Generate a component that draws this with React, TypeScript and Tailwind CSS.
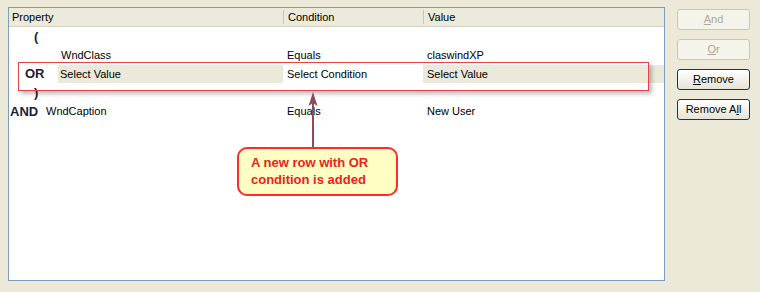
import React from 'react';

const font = { fontFamily: '"Liberation Sans", Arial, sans-serif' };

function XpButton({ children, disabled }: { children: React.ReactNode; disabled?: boolean }) {
  return (
    <button
      type="button"
      className={
        disabled
          ? 'w-[73px] h-[21px] rounded-[3px] border border-[#c9c7ba] bg-[#f5f4ea] text-[11px] text-[#aca899] leading-none'
          : 'w-[73px] h-[21px] rounded-[3px] border border-[#003c74] bg-gradient-to-b from-white to-[#e6e3d6] text-[11px] text-black leading-none'
      }
    >
      {children}
    </button>
  );
}

export default function App() {
  return (
    <div className="w-[760px] h-[292px] bg-[#ece9d8] relative flex text-[11px] text-black" style={font}>
      {/* List */}
      <div className="ml-[8px] mt-[7px] w-[657px] h-[274px] border border-[#7f9db9] bg-white flex flex-col">
        <div className="h-[19px] flex items-center bg-[#ebeadb] border-b border-[#d6d2c2] shrink-0">
          <div className="w-[274px] pl-[3px]">Property</div>
          <div className="w-[140px] pl-[4px] border-l border-[#c7c5b2] h-[14px] flex items-center">Condition</div>
          <div className="flex-1 pl-[4px] border-l border-[#c7c5b2] h-[14px] flex items-center">Value</div>
        </div>

        <div className="h-[19px] flex items-center">
          <span className="pl-[25px] font-bold text-[13px] text-[#1c1c3c]">(</span>
        </div>

        <div className="h-[19px] flex items-center">
          <div className="w-[274px] pl-[52px]">WndClass</div>
          <div className="w-[140px] pl-[4px]">Equals</div>
          <div className="flex-1 pl-[4px]">claswindXP</div>
        </div>

        <div className="h-[18px] flex items-stretch">
          <div className="w-[49px] pl-[16px] flex items-center font-bold text-[13px] text-[#1c1c3c]">OR</div>
          <div className="w-[225px] pl-[2px] flex items-center bg-[#ebe9d9]">Select Value</div>
          <div className="w-[140px] pl-[4px] flex items-center">Select Condition</div>
          <div className="flex-1 pl-[4px] flex items-center bg-[#ebe9d9]">Select Value</div>
        </div>

        <div className="h-[19px] flex items-center">
          <span className="pl-[25px] font-bold text-[13px] text-[#1c1c3c]">)</span>
        </div>

        <div className="h-[19px] flex items-center">
          <div className="w-[37px] pl-[1px] font-bold text-[13px] text-[#1c1c3c]">AND</div>
          <div className="w-[237px]">WndCaption</div>
          <div className="w-[140px] pl-[4px]">Equals</div>
          <div className="flex-1 pl-[4px]">New User</div>
        </div>
      </div>

      {/* Buttons */}
      <div className="ml-[12px] mt-[9px] flex flex-col gap-[9px]">
        <XpButton disabled>
          <span className="underline">A</span>nd
        </XpButton>
        <XpButton disabled>
          <span className="underline">O</span>r
        </XpButton>
        <XpButton>
          <span className="underline">R</span>emove
        </XpButton>
        <XpButton>
          Remove A<span className="underline">l</span>l
        </XpButton>
      </div>

      {/* Annotation: highlight box */}
      <div className="absolute left-[18px] top-[62px] w-[631px] h-[29px] border border-[#e8434b] shadow-[3px_3px_4px_rgba(0,0,0,0.25)]" />

      {/* Annotation: arrow */}
      <svg className="absolute left-[306px] top-[90px]" width="14" height="60" viewBox="0 0 14 60">
        <line x1="7" y1="12" x2="7" y2="60" stroke="#8c4b5c" strokeWidth="2" />
        <path d="M7 2 L11.5 16 L7 13 L2.5 16 Z" fill="#8c4b5c" />
      </svg>

      {/* Annotation: callout */}
      <div className="absolute left-[237px] top-[147px] w-[161px] h-[49px] rounded-[10px] border-2 border-[#ff2a2a] bg-[#ffffc4] pl-[12px] pt-[5px] text-[13px] font-bold leading-[17px] text-[#f02020]">
        A new row with OR
        <br />
        condition is added
      </div>
    </div>
  );
}
